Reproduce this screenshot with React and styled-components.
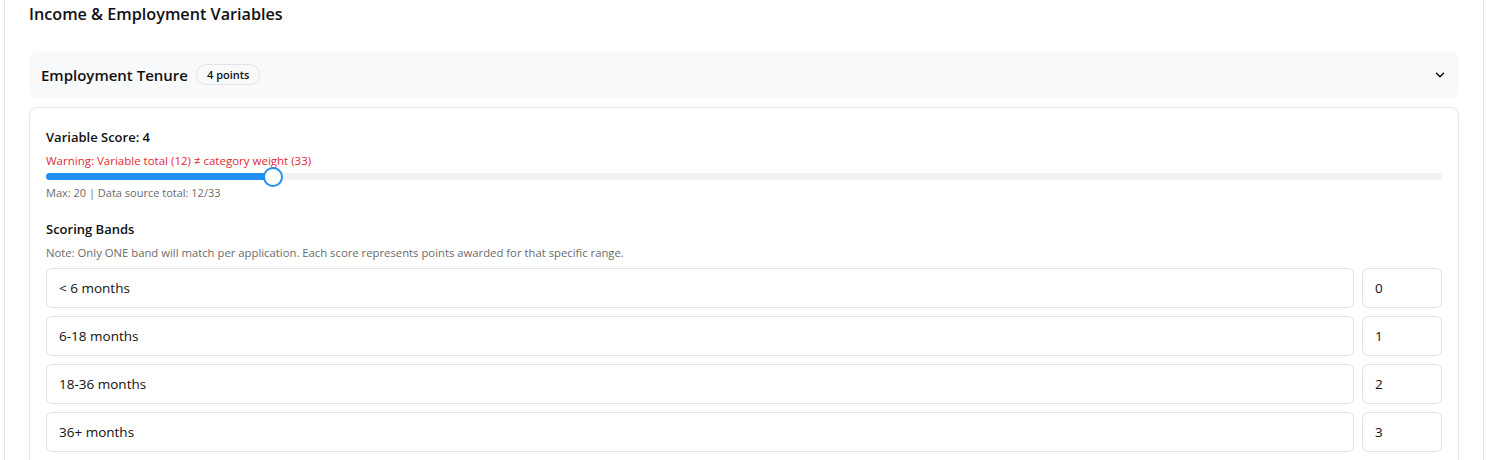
import React from "react";
import styled, { createGlobalStyle } from "styled-components";

const Global = createGlobalStyle`
  html, body { margin: 0; padding: 0; background: #ffffff; }
  body { font-family: "Open Sans", "Noto Sans", sans-serif; color: #111; overflow: hidden; }
  * { box-sizing: border-box; }
`;

const Page = styled.div`
  padding: 0 3px 0 4px;
  height: 460px;
  overflow: hidden;
`;

const Card = styled.section`
  margin-top: -21px;
  border: 1px solid #e5e5e5;
  border-radius: 10px;
  padding: 20px 24px 24px;
  background: #fff;
`;

const Title = styled.h2`
  margin: 0 0 23px;
  font-size: 16.2px;
  line-height: 28px;
  font-weight: 600;
  color: #111;
`;

const AccordionHeader = styled.button`
  display: flex;
  align-items: center;
  gap: 8px;
  width: 100%;
  height: 47px;
  padding: 0 12px;
  border: none;
  border-radius: 8px;
  background: #f8f9fa;
  font-family: inherit;
  cursor: pointer;
  text-align: left;
`;

const HeaderTitle = styled.span`
  font-size: 15px;
  font-weight: 600;
  color: #111;
`;

const Badge = styled.span`
  display: inline-flex;
  align-items: center;
  height: 21px;
  padding: 0 10px;
  border: 1px solid #e3e3e3;
  border-radius: 999px;
  font-size: 11px;
  font-weight: 600;
  color: #111;
`;

const Chevron = styled.span`
  margin-left: auto;
  display: flex;
  align-items: center;
  color: #111;
`;

const Panel = styled.div`
  margin-top: 9px;
  border: 1px solid #e5e5e5;
  border-radius: 8px;
  padding: 19px 16px 16px;
`;

const Label = styled.div`
  font-size: 13px;
  line-height: 20px;
  font-weight: 600;
  color: #111;
`;

const Warning = styled.div`
  margin-top: 6px;
  font-size: 11.5px;
  line-height: 16px;
  color: #e22a36;
`;

const SliderTrack = styled.div`
  position: relative;
  height: 7px;
  margin-top: 4px;
  border-radius: 4px;
  background: #f2f2f2;
`;

const SliderFill = styled.div`
  height: 100%;
  border-radius: 4px;
  background: #1e90f0;
`;

const SliderThumb = styled.div`
  position: absolute;
  top: 50%;
  width: 20px;
  height: 20px;
  margin-left: -10px;
  margin-top: -10px;
  border-radius: 50%;
  background: #fff;
  border: 2.5px solid #1e90f0;
`;

const Hint = styled.div`
  margin-top: ${(p) => p.$top || 4}px;
  font-size: ${(p) => p.$size || 11}px;
  line-height: 16px;
  color: #6b6b6b;
`;

const Section = styled.div`
  margin-top: 18px;
`;

const Bands = styled.div`
  display: flex;
  flex-direction: column;
  gap: 8px;
  margin-top: 7px;
`;

const BandRow = styled.div`
  display: grid;
  grid-template-columns: 1fr 80px;
  gap: 8px;
`;

const Input = styled.input`
  height: 40px;
  width: 100%;
  padding: 0 12px;
  border: 1px solid #e3e3e3;
  border-radius: 6px;
  font-family: inherit;
  font-size: 13.5px;
  color: #111;
  background: #fff;
  outline: none;
`;

const bands = [
  ["< 6 months", "0"],
  ["6-18 months", "1"],
  ["18-36 months", "2"],
  ["36+ months", "3"],
];

export default function App() {
  const pct = 16.26;
  return (
    <Page>
      <Global />
      <Card>
        <Title>Income &amp; Employment Variables</Title>
        <AccordionHeader>
          <HeaderTitle>Employment Tenure</HeaderTitle>
          <Badge>4 points</Badge>
          <Chevron>
            <svg width="14" height="14" viewBox="0 0 24 24" fill="none" stroke="currentColor" strokeWidth="2.6" strokeLinecap="round" strokeLinejoin="round">
              <path d="m6 9 6 6 6-6" />
            </svg>
          </Chevron>
        </AccordionHeader>
        <Panel>
          <Label>Variable Score: 4</Label>
          <Warning>Warning: Variable total (12) ≠ category weight (33)</Warning>
          <SliderTrack>
            <SliderFill style={{ width: `${pct}%` }} />
            <SliderThumb style={{ left: `${pct}%` }} />
          </SliderTrack>
          <Hint $top={5}>Max: 20 | Data source total: 12/33</Hint>
          <Section>
            <Label>Scoring Bands</Label>
            <Hint $top={6} $size={11.3}>Note: Only ONE band will match per application. Each score represents points awarded for that specific range.</Hint>
            <Bands>
              {bands.map(([range, score]) => (
                <BandRow key={range}>
                  <Input defaultValue={range} />
                  <Input defaultValue={score} />
                </BandRow>
              ))}
            </Bands>
          </Section>
        </Panel>
      </Card>
    </Page>
  );
}
